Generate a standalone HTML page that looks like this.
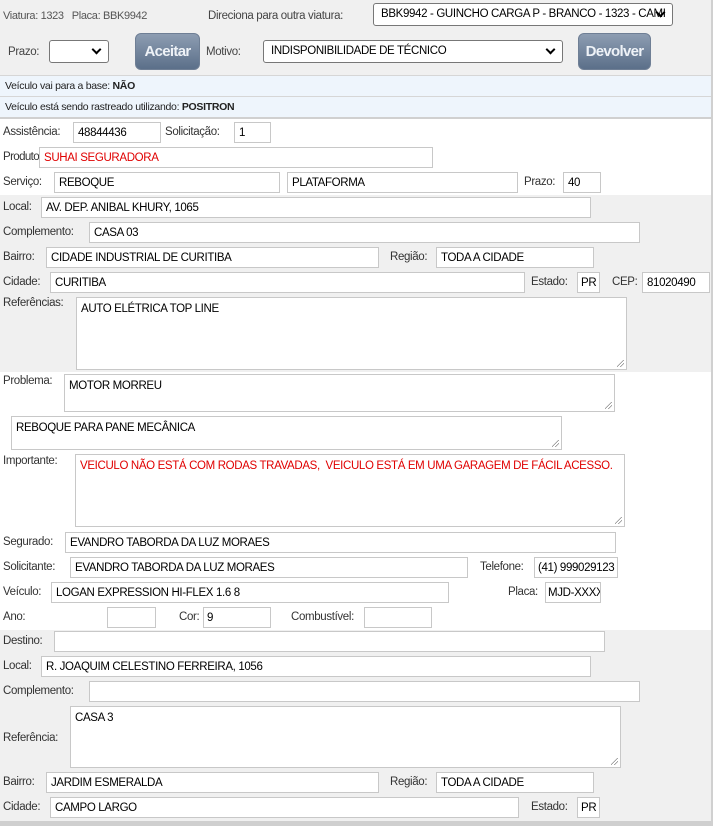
<!DOCTYPE html>
<html><head><meta charset="utf-8"><style>
*{margin:0;padding:0;box-sizing:border-box}
body{width:723px;height:826px;position:relative;background:#fff;font-family:"Liberation Sans",Arial,sans-serif;overflow:hidden}
.bg{position:absolute;left:0;width:712px}
.l{position:absolute;font-size:11.5px;color:#333;white-space:nowrap;line-height:14px;letter-spacing:-0.35px}
.i{position:absolute;background:#fff;border:1px solid #c8c8c8;font-size:11.5px;color:#000;white-space:nowrap;overflow:hidden;padding-left:4px;padding-top:1px;letter-spacing:-0.35px}
.t{padding-top:4px;line-height:14px}
.t::after{content:"";position:absolute;right:2px;bottom:2px;width:7px;height:7px;background:linear-gradient(135deg,transparent 45%,#888 46%,#888 52%,transparent 53%,transparent 70%,#888 71%,#888 77%,transparent 78%)}
.s{position:absolute;background:#fff;border:1px solid #777;border-radius:3px;font-size:11.5px;padding-left:7px;padding-right:22px;line-height:20px;white-space:nowrap;overflow:hidden;letter-spacing:-0.35px}
.s::after{content:"";position:absolute;right:8px;top:5px;width:5px;height:5px;border-right:2px solid #000;border-bottom:2px solid #000;transform:rotate(45deg)}
.b{position:absolute;border-radius:6px;background:linear-gradient(#8d9db2,#5b6f89);color:#eef2f7;font-weight:bold;font-size:15px;text-align:center;line-height:36px;border:1px solid #6f7f95;letter-spacing:-0.7px}
.bar{position:absolute;left:0;width:712px;background:#eef5fc;border-top:1px solid #d6d6d6;font-size:10.5px;color:#222;padding-left:5px;letter-spacing:-0.3px}
.red{color:#e00000}
</style></head><body>
<div class="bg" style="top:0;height:75px;background:#f0f0f0"></div>
<div class="bar" style="top:75px;height:21px;line-height:20px">Veículo vai para a base: <b>NÃO</b></div>
<div class="bar" style="top:96px;height:21px;line-height:20px">Veículo está sendo rastreado utilizando: <b>POSITRON</b></div>
<div class="bg" style="top:117px;height:2px;background:#d0d0d0"></div>
<div class="bg" style="top:195px;height:177px;background:#f0f0f0"></div>
<div class="bg" style="top:630px;height:192px;background:#f0f0f0"></div>
<div style="position:absolute;left:0;top:821px;width:712px;height:5px;background:#cfcfcf"></div>
<div style="position:absolute;left:711px;top:0;width:2px;height:826px;background:#d0d0d0"></div>

<div class="l" style="left:3px;top:9px;font-size:11px;color:#555">Viatura: 1323 &nbsp;&nbsp;Placa: BBK9942</div>
<div class="l" style="left:208px;top:9px;color:#444">Direciona para outra viatura:</div>
<div class="s" style="left:373px;top:3px;width:300px;height:23px">BBK9942 - GUINCHO CARGA P - BRANCO - 1323 - CAMI</div>
<div class="l" style="left:8px;top:45px;color:#444">Prazo:</div>
<div class="s" style="left:49px;top:40px;width:60px;height:23px"></div>
<div class="b" style="left:135px;top:33px;width:65px;height:37px">Aceitar</div>
<div class="l" style="left:206px;top:45px;color:#444">Motivo:</div>
<div class="s" style="left:263px;top:40px;width:300px;height:23px">INDISPONIBILIDADE DE TÉCNICO</div>
<div class="b" style="left:578px;top:33px;width:73px;height:37px">Devolver</div>

<div class="l" style="left:3px;top:125px">Assistência:</div><div class="i" style="left:73px;top:122px;width:88px;height:21px;line-height:19px">48844436</div>
<div class="l" style="left:165px;top:125px">Solicitação:</div><div class="i" style="left:234px;top:122px;width:37px;height:21px;line-height:19px">1</div>
<div class="l" style="left:3px;top:150px;letter-spacing:-0.6px">Produto:</div><div class="i red" style="left:39px;top:147px;width:394px;height:21px;line-height:19px">SUHAI SEGURADORA</div>
<div class="l" style="left:3px;top:175px">Serviço:</div><div class="i" style="left:54px;top:172px;width:226px;height:21px;line-height:19px">REBOQUE</div>
<div class="i" style="left:287px;top:172px;width:231px;height:21px;line-height:19px">PLATAFORMA</div>
<div class="l" style="left:524px;top:175px">Prazo:</div><div class="i" style="left:563px;top:172px;width:38px;height:21px;line-height:19px">40</div>

<div class="l" style="left:3px;top:200px">Local:</div><div class="i" style="left:41px;top:197px;width:550px;height:21px;line-height:19px">AV. DEP. ANIBAL KHURY, 1065</div>
<div class="l" style="left:3px;top:225px">Complemento:</div><div class="i" style="left:89px;top:222px;width:551px;height:21px;line-height:19px">CASA 03</div>
<div class="l" style="left:3px;top:250px">Bairro:</div><div class="i" style="left:46px;top:247px;width:333px;height:21px;line-height:19px">CIDADE INDUSTRIAL DE CURITIBA</div>
<div class="l" style="left:390px;top:250px">Região:</div><div class="i" style="left:436px;top:247px;width:158px;height:21px;line-height:19px">TODA A CIDADE</div>
<div class="l" style="left:3px;top:275px">Cidade:</div><div class="i" style="left:50px;top:272px;width:475px;height:21px;line-height:19px">CURITIBA</div>
<div class="l" style="left:531px;top:275px">Estado:</div><div class="i" style="left:577px;top:272px;width:23px;height:21px;line-height:19px;padding-left:3px">PR</div>
<div class="l" style="left:612px;top:275px">CEP:</div><div class="i" style="left:642px;top:272px;width:68px;height:21px;line-height:19px">81020490</div>
<div class="l" style="left:3px;top:296px">Referências:</div><div class="i t" style="left:76px;top:297px;width:551px;height:73px">AUTO ELÉTRICA TOP LINE</div>

<div class="l" style="left:3px;top:374px">Problema:</div><div class="i t" style="left:64px;top:374px;width:551px;height:38px">MOTOR MORREU</div>
<div class="i t" style="left:11px;top:416px;width:551px;height:34px">REBOQUE PARA PANE MECÂNICA</div>
<div class="l" style="left:3px;top:454px">Importante:</div><div class="i t red" style="left:75px;top:454px;width:550px;height:73px">VEICULO NÃO ESTÁ COM RODAS TRAVADAS,&nbsp; VEICULO ESTÁ EM UMA GARAGEM DE FÁCIL ACESSO.</div>
<div class="l" style="left:3px;top:535px">Segurado:</div><div class="i" style="left:65px;top:532px;width:551px;height:21px;line-height:19px">EVANDRO TABORDA DA LUZ MORAES</div>
<div class="l" style="left:3px;top:560px">Solicitante:</div><div class="i" style="left:70px;top:557px;width:398px;height:21px;line-height:19px">EVANDRO TABORDA DA LUZ MORAES</div>
<div class="l" style="left:480px;top:560px">Telefone:</div><div class="i" style="left:534px;top:557px;width:84px;height:21px;line-height:19px;padding-left:3px">(41) 999029123</div>
<div class="l" style="left:3px;top:585px">Veículo:</div><div class="i" style="left:51px;top:582px;width:398px;height:21px;line-height:19px">LOGAN EXPRESSION HI-FLEX 1.6 8</div>
<div class="l" style="left:508px;top:585px">Placa:</div><div class="i" style="left:545px;top:582px;width:56px;height:21px;line-height:19px;padding-left:2px">MJD-XXXX</div>
<div class="l" style="left:3px;top:610px">Ano:</div><div class="i" style="left:107px;top:607px;width:49px;height:21px"></div>
<div class="l" style="left:179px;top:610px">Cor:</div><div class="i" style="left:203px;top:607px;width:68px;height:21px;line-height:19px;padding-left:3px">9</div>
<div class="l" style="left:291px;top:610px">Combustível:</div><div class="i" style="left:364px;top:607px;width:68px;height:21px"></div>

<div class="l" style="left:3px;top:634px">Destino:</div><div class="i" style="left:54px;top:631px;width:551px;height:21px"></div>
<div class="l" style="left:3px;top:659px">Local:</div><div class="i" style="left:41px;top:656px;width:550px;height:21px;line-height:19px">R. JOAQUIM CELESTINO FERREIRA, 1056</div>
<div class="l" style="left:3px;top:684px">Complemento:</div><div class="i" style="left:89px;top:681px;width:551px;height:21px"></div>
<div class="l" style="left:3px;top:731px">Referência:</div><div class="i t" style="left:70px;top:706px;width:551px;height:62px">CASA 3</div>
<div class="l" style="left:3px;top:775px">Bairro:</div><div class="i" style="left:46px;top:772px;width:333px;height:21px;line-height:19px">JARDIM ESMERALDA</div>
<div class="l" style="left:390px;top:775px">Região:</div><div class="i" style="left:436px;top:772px;width:158px;height:21px;line-height:19px">TODA A CIDADE</div>
<div class="l" style="left:3px;top:800px">Cidade:</div><div class="i" style="left:50px;top:797px;width:469px;height:21px;line-height:19px">CAMPO LARGO</div>
<div class="l" style="left:531px;top:800px">Estado:</div><div class="i" style="left:577px;top:797px;width:23px;height:21px;line-height:19px;padding-left:3px">PR</div>
</body></html>
